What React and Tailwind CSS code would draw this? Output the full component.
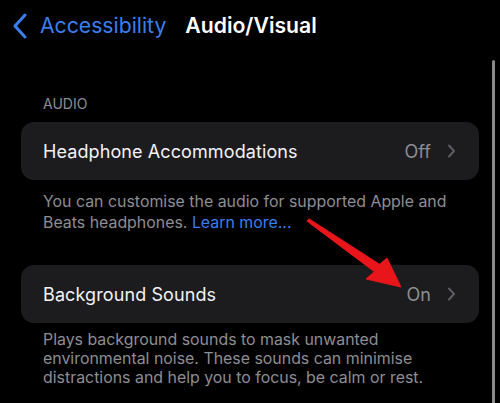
import React from "react";

function Chevron() {
  return (
    <svg width="9" height="14" viewBox="0 0 9 14" fill="none">
      <path d="M2 1.5 L7 7 L2 12.5" stroke="#5d5d62" strokeWidth="2" strokeLinecap="round" strokeLinejoin="round" />
    </svg>
  );
}

function Row({ label, value }) {
  return (
    <div className="mx-[21px] h-[58px] rounded-[13px] bg-[#1c1c1e] flex items-center pl-[22px] pr-[23px]">
      <span className="text-[18px] text-[#f2f2f7] tracking-[0.1px]">{label}</span>
      <span className="ml-auto text-[18px] text-[#8d8d93] mr-[16px]">{value}</span>
      <Chevron />
    </div>
  );
}

export default function App() {
  return (
    <div
      className="relative w-[500px] h-[403px] bg-black overflow-hidden"
      style={{ fontFamily: "Inter, 'Noto Sans', sans-serif" }}
    >
      <div className="h-[52px] flex items-center pl-[12px]">
        <svg width="16" height="26" viewBox="0 0 16 26" fill="none">
          <path d="M13 2 L3 13 L13 24" stroke="#3a7ef0" strokeWidth="3" strokeLinecap="round" strokeLinejoin="round" />
        </svg>
        <span className="ml-[12px] text-[21.2px] text-[#3a7ef0]">Accessibility</span>
        <span className="ml-[19px] text-[21.2px] font-semibold text-white">Audio/Visual</span>
      </div>

      <div className="pl-[43px] mt-[43px] text-[14px] text-[#8d8d93] leading-[18px]">AUDIO</div>
      <div className="mt-[9px]">
        <Row label="Headphone Accommodations" value="Off" />
      </div>
      <p className="pl-[43px] pr-[30px] mt-[11px] text-[15.9px] leading-[21px] text-[#8d8d93]">
        You can customise the audio for supported Apple and Beats headphones.{" "}
        <span className="text-[#3a7ef0]">Learn more...</span>
      </p>

      <div className="mt-[32px]">
        <Row label="Background Sounds" value="On" />
      </div>
      <p className="pl-[43px] pr-[30px] mt-[7px] text-[15.9px] leading-[19px] text-[#8d8d93]">
        Plays background sounds to mask unwanted environmental noise. These sounds can minimise distractions and help you to focus, be calm or rest.
      </p>

      {/* scrollbar */}
      <div className="absolute left-[492px] top-[60px] w-[3px] h-[350px] rounded-full bg-[#8a8a8a]" />

      {/* red arrow */}
      <svg className="absolute left-0 top-0" width="500" height="403" viewBox="0 0 500 403">
        <polygon
          points="308.9,218.8 379.6,264.3 387,258 401,287 366,279 374.4,271.7 307.1,221.2"
          fill="#e8151b"
          stroke="#e8151b"
          strokeWidth="1"
          strokeLinejoin="round"
        />
      </svg>
    </div>
  );
}
